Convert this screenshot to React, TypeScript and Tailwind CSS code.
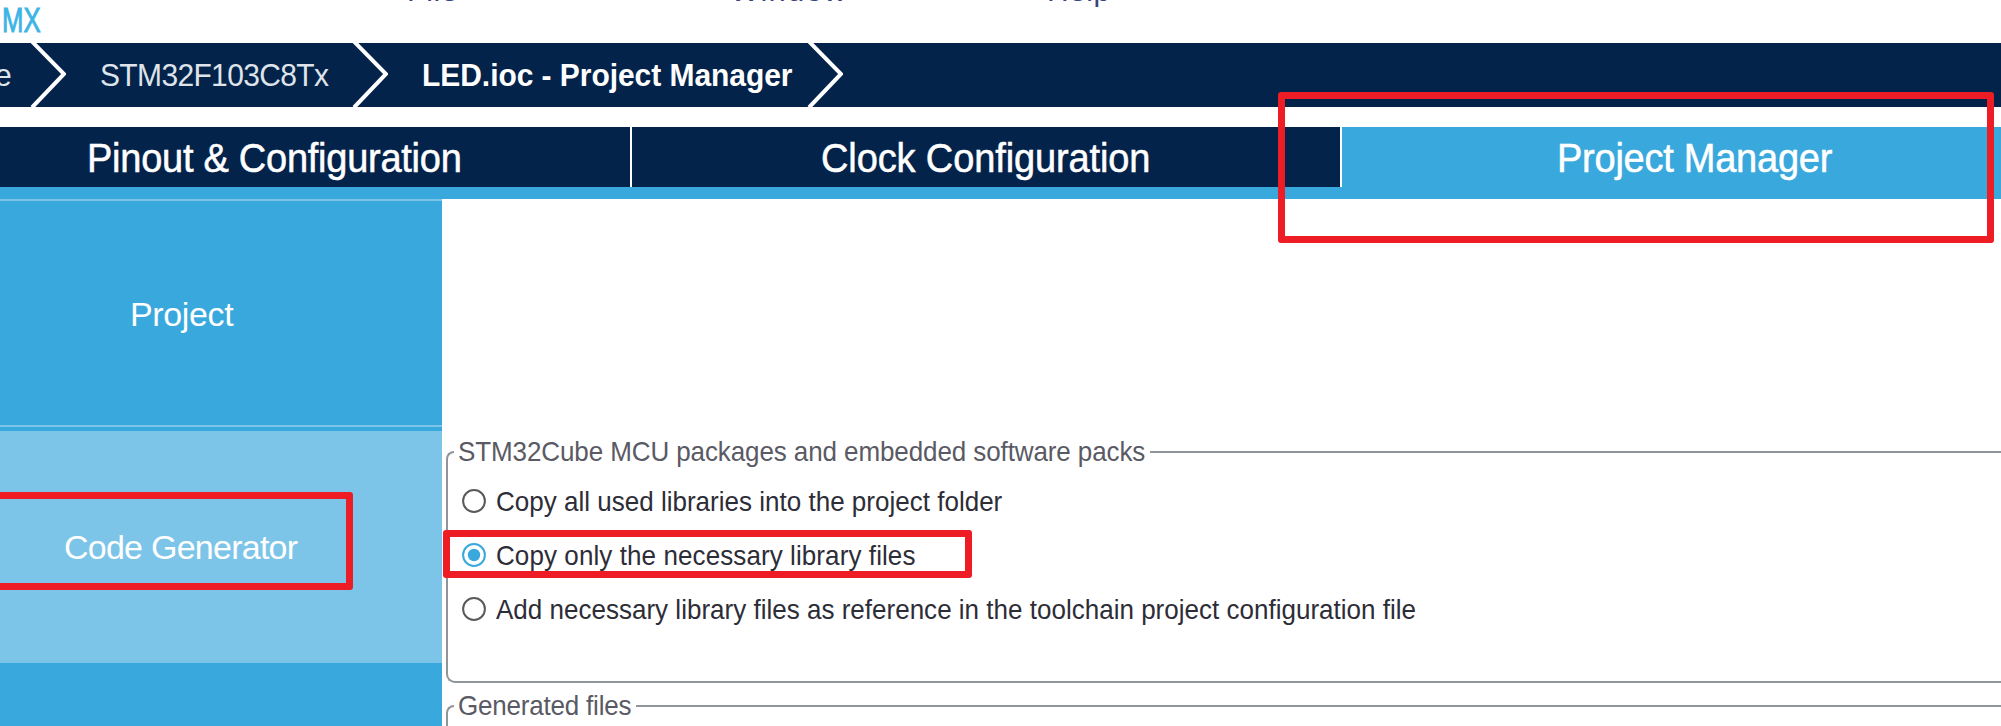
import React from "react";

const Chevron = () => (
  <svg className="h-16 w-9 shrink-0" viewBox="0 0 36 64" fill="none">
    <path d="M2 -1.5L34 31L2 64.5" stroke="#fff" strokeWidth="4" />
  </svg>
);

function Radio({ label, checked, ls }: { label: string; checked?: boolean; ls: string }) {
  return (
    <div className="flex h-[54px] items-center gap-[10px]">
      <svg className="h-6 w-6 shrink-0" viewBox="0 0 24 24" fill="none">
        <circle cx="12" cy="12" r="10.9" stroke={checked ? "#39a8dc" : "#5a5a5a"} strokeWidth="2" />
        {checked && <circle cx="12" cy="12" r="6.2" fill="#39a8dc" />}
      </svg>
      <span className={`inline-block scale-y-108 text-[26px] leading-[30px] text-[#2d2d37] ${ls}`}>{label}</span>
    </div>
  );
}

function Group({ title, ls, className, children }: { title: string; ls: string; className: string; children?: React.ReactNode }) {
  return (
    <section className={`flex w-[1575px] flex-col ${className}`}>
      <div className="flex h-8 shrink-0">
        <div className="mt-[15px] h-[17px] w-2 shrink-0 rounded-tl-[9px] border-t-2 border-l-2 border-[#8f959b]" />
        <span className={`ml-[4px] inline-block shrink-0 scale-y-108 text-[26px] leading-[30px] text-[#5a5a64] ${ls}`}>{title}</span>
        <div className="mt-[15px] ml-[5px] h-[2px] grow bg-[#8f959b]" />
      </div>
      <div className="grow rounded-bl-[9px] border-b-2 border-l-2 border-[#8f959b] pl-[14px]">{children}</div>
    </section>
  );
}

export default function App() {
  return (
    <div className="relative flex h-[726px] w-[2001px] flex-col overflow-hidden bg-white font-['Liberation_Sans',Arial,sans-serif] whitespace-nowrap">
      <header className="relative h-[43px] shrink-0 overflow-hidden">
        <span className="absolute top-[-25px] left-[-39px] text-[30px] leading-[30px] text-[#8fd3f0]">Cube</span>
        <span className="absolute top-[2px] left-[2px] origin-left scale-x-78 scale-y-105 text-[33px] leading-[36px] text-[#3cb4e6] [-webkit-text-stroke:0.9px_#3cb4e6]">MX</span>
        <span className="absolute top-[-25px] left-[407px] text-[30px] leading-[32px] tracking-[0.8px] text-[#39437b]">File</span>
        <span className="absolute top-[-25px] left-[730px] text-[31px] leading-[32px] tracking-[1.2px] text-[#39437b]">Window</span>
        <span className="absolute top-[-25px] left-[1047px] text-[30px] leading-[32px] tracking-[0.5px] text-[#39437b]">Help</span>
      </header>

      <nav className="flex h-16 shrink-0 items-center bg-[#03234b] text-[30px] leading-8 text-white">
        <span className="-ml-[5px] w-[35px] scale-y-107 text-[#dfe4ea]">e</span>
        <Chevron />
        <span className="ml-[34px] w-[252px] scale-y-107 tracking-[-0.65px] text-[#dfe4ea]">STM32F103C8Tx</span>
        <Chevron />
        <span className="ml-[34px] w-[385px] scale-y-107 font-bold tracking-[-0.05px]">LED.ioc - Project Manager</span>
        <Chevron />
      </nav>

      <div className="mt-5 flex h-[72px] shrink-0 bg-[#39a8dc] text-[38px] leading-[62px] text-white [-webkit-text-stroke:0.5px_#fff]">
        <div className="flex h-[60px] w-[632px] border-r-2 border-white bg-[#03234b] pl-[87px]">
          <span className="inline-block scale-y-107 tracking-[-0.26px]">Pinout &amp; Configuration</span>
        </div>
        <div className="flex h-[60px] w-[710px] border-r-2 border-white bg-[#03234b] pl-[189px]">
          <span className="inline-block scale-y-107 tracking-[-0.12px]">Clock Configuration</span>
        </div>
        <div className="flex h-[60px] pl-[215px]">
          <span className="inline-block scale-y-107 tracking-[-0.25px]">Project Manager</span>
        </div>
      </div>

      <main className="flex grow">
        <aside className="flex w-[442px] shrink-0 flex-col bg-[#39a8dc] text-[34px] text-white">
          <div className="flex h-[228px] items-center border-y-2 border-[#7cc5e9] pt-[3px] pl-[130px]">
            <span className="tracking-[-0.35px]">Project</span>
          </div>
          <div className="mt-1 flex h-[232px] items-center bg-[#7cc5e9] pt-px pl-[64px]">
            <span className="tracking-[-0.75px]">Code Generator</span>
          </div>
        </aside>
        <div className="flex w-[1559px] flex-col overflow-hidden pt-[237px] pl-1">
          <Group title="STM32Cube MCU packages and embedded software packs" ls="tracking-[-0.1px]" className="h-[247px] shrink-0">
            <div className="mt-[6px] flex flex-col">
              <Radio label="Copy all used libraries into the project folder" ls="tracking-[0.01px]" />
              <Radio label="Copy only the necessary library files" checked ls="tracking-[0.09px]" />
              <Radio label="Add necessary library files as reference in the toolchain project configuration file" ls="tracking-[0.01px]" />
            </div>
          </Group>
          <Group title="Generated files" ls="tracking-[-0.2px]" className="mt-[7px] h-[160px] shrink-0" />
        </div>
      </main>

      <div className="absolute top-[92px] left-[1278px] h-[151px] w-[716px] rounded-[3px] border-[7px] border-[#ee1c25]" />
      <div className="absolute top-[492px] left-[-20px] h-[98px] w-[373px] rounded-[3px] border-[7px] border-[#ee1c25]" />
      <div className="absolute top-[530px] left-[443px] h-[48px] w-[529px] rounded-[3px] border-[7px] border-[#ee1c25]" />
    </div>
  );
}
